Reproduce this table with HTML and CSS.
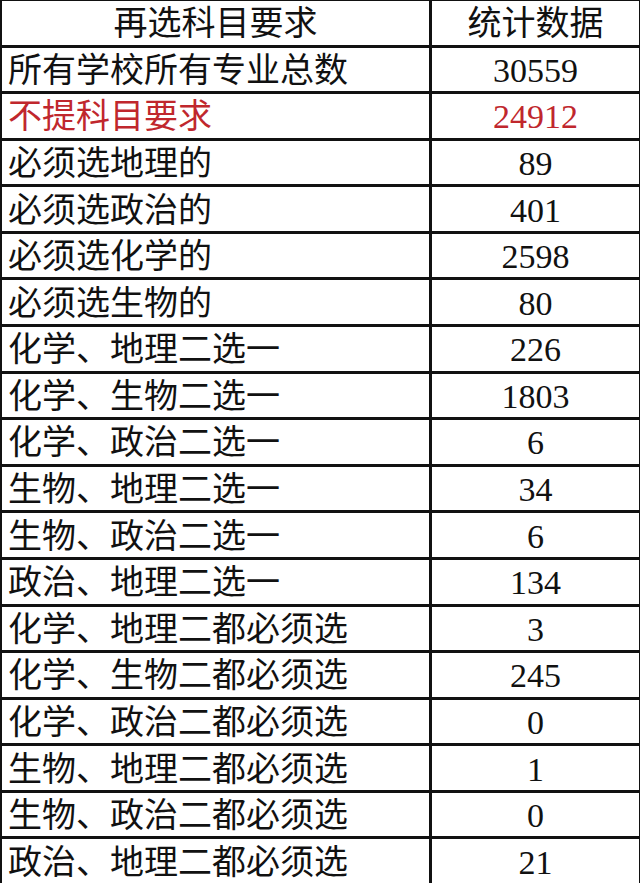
FILE: index.html
```html
<!DOCTYPE html>
<html lang="zh-CN">
<head>
<meta charset="utf-8">
<title>再选科目要求统计</title>
<link rel="stylesheet" href="styles.css">
</head>
<body>
<div class="stats" role="table">
  <div class="row head" role="row"><div class="cell name" role="columnheader">再选科目要求</div><div class="cell num" role="columnheader">统计数据</div></div>
  <div class="row" role="row"><div class="cell name">所有学校所有专业总数</div><div class="cell num">30559</div></div>
  <div class="row red" role="row"><div class="cell name">不提科目要求</div><div class="cell num">24912</div></div>
  <div class="row" role="row"><div class="cell name">必须选地理的</div><div class="cell num">89</div></div>
  <div class="row" role="row"><div class="cell name">必须选政治的</div><div class="cell num">401</div></div>
  <div class="row" role="row"><div class="cell name">必须选化学的</div><div class="cell num">2598</div></div>
  <div class="row" role="row"><div class="cell name">必须选生物的</div><div class="cell num">80</div></div>
  <div class="row" role="row"><div class="cell name">化学、地理二选一</div><div class="cell num">226</div></div>
  <div class="row" role="row"><div class="cell name">化学、生物二选一</div><div class="cell num">1803</div></div>
  <div class="row" role="row"><div class="cell name">化学、政治二选一</div><div class="cell num">6</div></div>
  <div class="row" role="row"><div class="cell name">生物、地理二选一</div><div class="cell num">34</div></div>
  <div class="row" role="row"><div class="cell name">生物、政治二选一</div><div class="cell num">6</div></div>
  <div class="row" role="row"><div class="cell name">政治、地理二选一</div><div class="cell num">134</div></div>
  <div class="row" role="row"><div class="cell name">化学、地理二都必须选</div><div class="cell num">3</div></div>
  <div class="row" role="row"><div class="cell name">化学、生物二都必须选</div><div class="cell num">245</div></div>
  <div class="row" role="row"><div class="cell name">化学、政治二都必须选</div><div class="cell num">0</div></div>
  <div class="row" role="row"><div class="cell name">生物、地理二都必须选</div><div class="cell num">1</div></div>
  <div class="row" role="row"><div class="cell name">生物、政治二都必须选</div><div class="cell num">0</div></div>
  <div class="row" role="row"><div class="cell name">政治、地理二都必须选</div><div class="cell num">21</div></div>
</div>
</body>
</html>
```
FILE: styles.css
```css
html, body {
  margin: 0;
  padding: 0;
  background: #ffffff;
}

.stats {
  box-sizing: border-box;
  width: 640px;
  height: 883px;
  display: grid;
  grid-template-columns: 427px 1fr;
  grid-template-rows: repeat(19, 1fr);
  gap: 3px;
  background: #111111;
  border-top: 1px solid #111111;
  border-left: 2px solid #111111;
  border-right: 1px solid #111111;
  font-family: "Liberation Serif", "Noto Sans CJK SC", serif;
  font-size: 34px;
  color: #111111;
}

.row {
  display: contents;
}

.cell {
  background: #ffffff;
  display: flex;
  align-items: center;
  padding-top: 3px;
  line-height: 1;
  white-space: nowrap;
  overflow: hidden;
}

.name {
  justify-content: flex-start;
  padding-left: 6px;
}

.num {
  justify-content: center;
}

.head .name {
  justify-content: center;
  padding-left: 0;
}

.red .cell {
  color: #c0272d;
}
```
